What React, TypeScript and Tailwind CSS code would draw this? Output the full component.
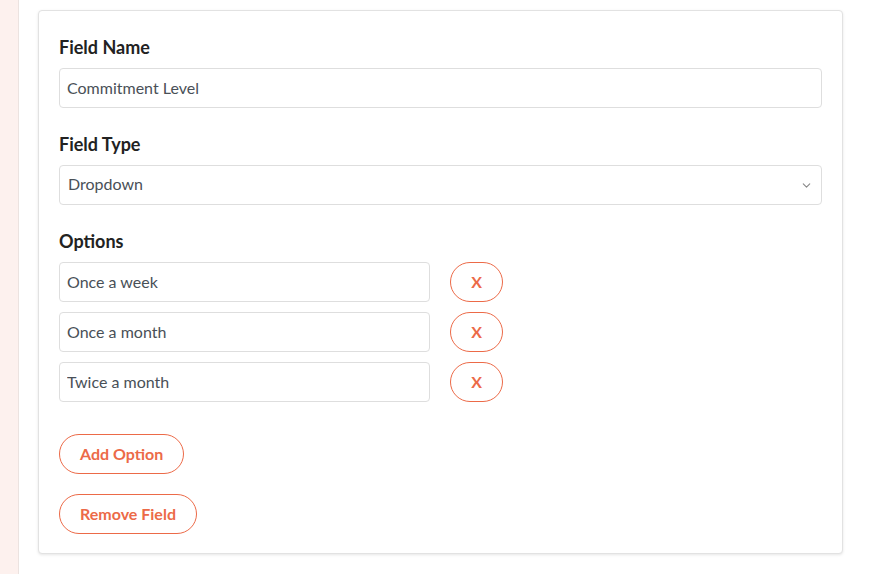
import { ChevronDown } from 'lucide-react'

const OPTIONS = ['Once a week', 'Once a month', 'Twice a month']

const inputBase =
  'h-10 rounded border border-[#dedede] bg-white px-[7px] pb-0.5 text-base text-[#495057] outline-none'

const pillCls =
  'h-10 rounded-full border border-[#ec6a48] bg-white px-5 text-base font-bold text-[#ec6a48]'

export default function App() {
  return (
    <div className="flex h-[574px] w-[871px] bg-white font-['Lato','Noto_Sans',sans-serif]">
      <div className="w-[19px] shrink-0 border-r border-[#ece3e0] bg-[#fdf1ee]" />
      <div className="flex-1 pl-[19px] pr-[28px] pt-[10px]">
        <div className="rounded border border-[#e2e2e2] bg-white px-5 pb-[19px] pt-[22px] shadow-[0_1px_3px_rgba(0,0,0,0.1)]">
          <label className="mb-[7px] block text-lg leading-7 font-bold text-[#222]">Field Name</label>
          <input className={`${inputBase} w-full`} defaultValue="Commitment Level" />

          <label className="mb-[7px] mt-[22px] block text-lg leading-7 font-bold text-[#222]">Field Type</label>
          <div className="relative">
            <select className={`${inputBase} w-full appearance-none pl-2`} defaultValue="Dropdown">
              <option>Dropdown</option>
              <option>Text</option>
            </select>
            <ChevronDown
              size={13}
              strokeWidth={2}
              className="pointer-events-none absolute right-[9px] top-[14px] text-[#888]"
            />
          </div>

          <label className="mb-[7px] mt-[22px] block text-lg leading-7 font-bold text-[#222]">Options</label>
          <div className="flex flex-col gap-[10px]">
            {OPTIONS.map((o) => (
              <div key={o} className="flex items-center gap-5">
                <input className={`${inputBase} w-[371px] shrink-0`} defaultValue={o} />
                <button className="h-10 w-[53px] shrink-0 rounded-full border border-[#ec6a48] bg-white text-base font-bold text-[#ec6a48]">
                  X
                </button>
              </div>
            ))}
          </div>

          <div className="mt-8 flex flex-col items-start gap-5">
            <button className={pillCls}>Add Option</button>
            <button className={pillCls}>Remove Field</button>
          </div>
        </div>
      </div>
    </div>
  )
}
